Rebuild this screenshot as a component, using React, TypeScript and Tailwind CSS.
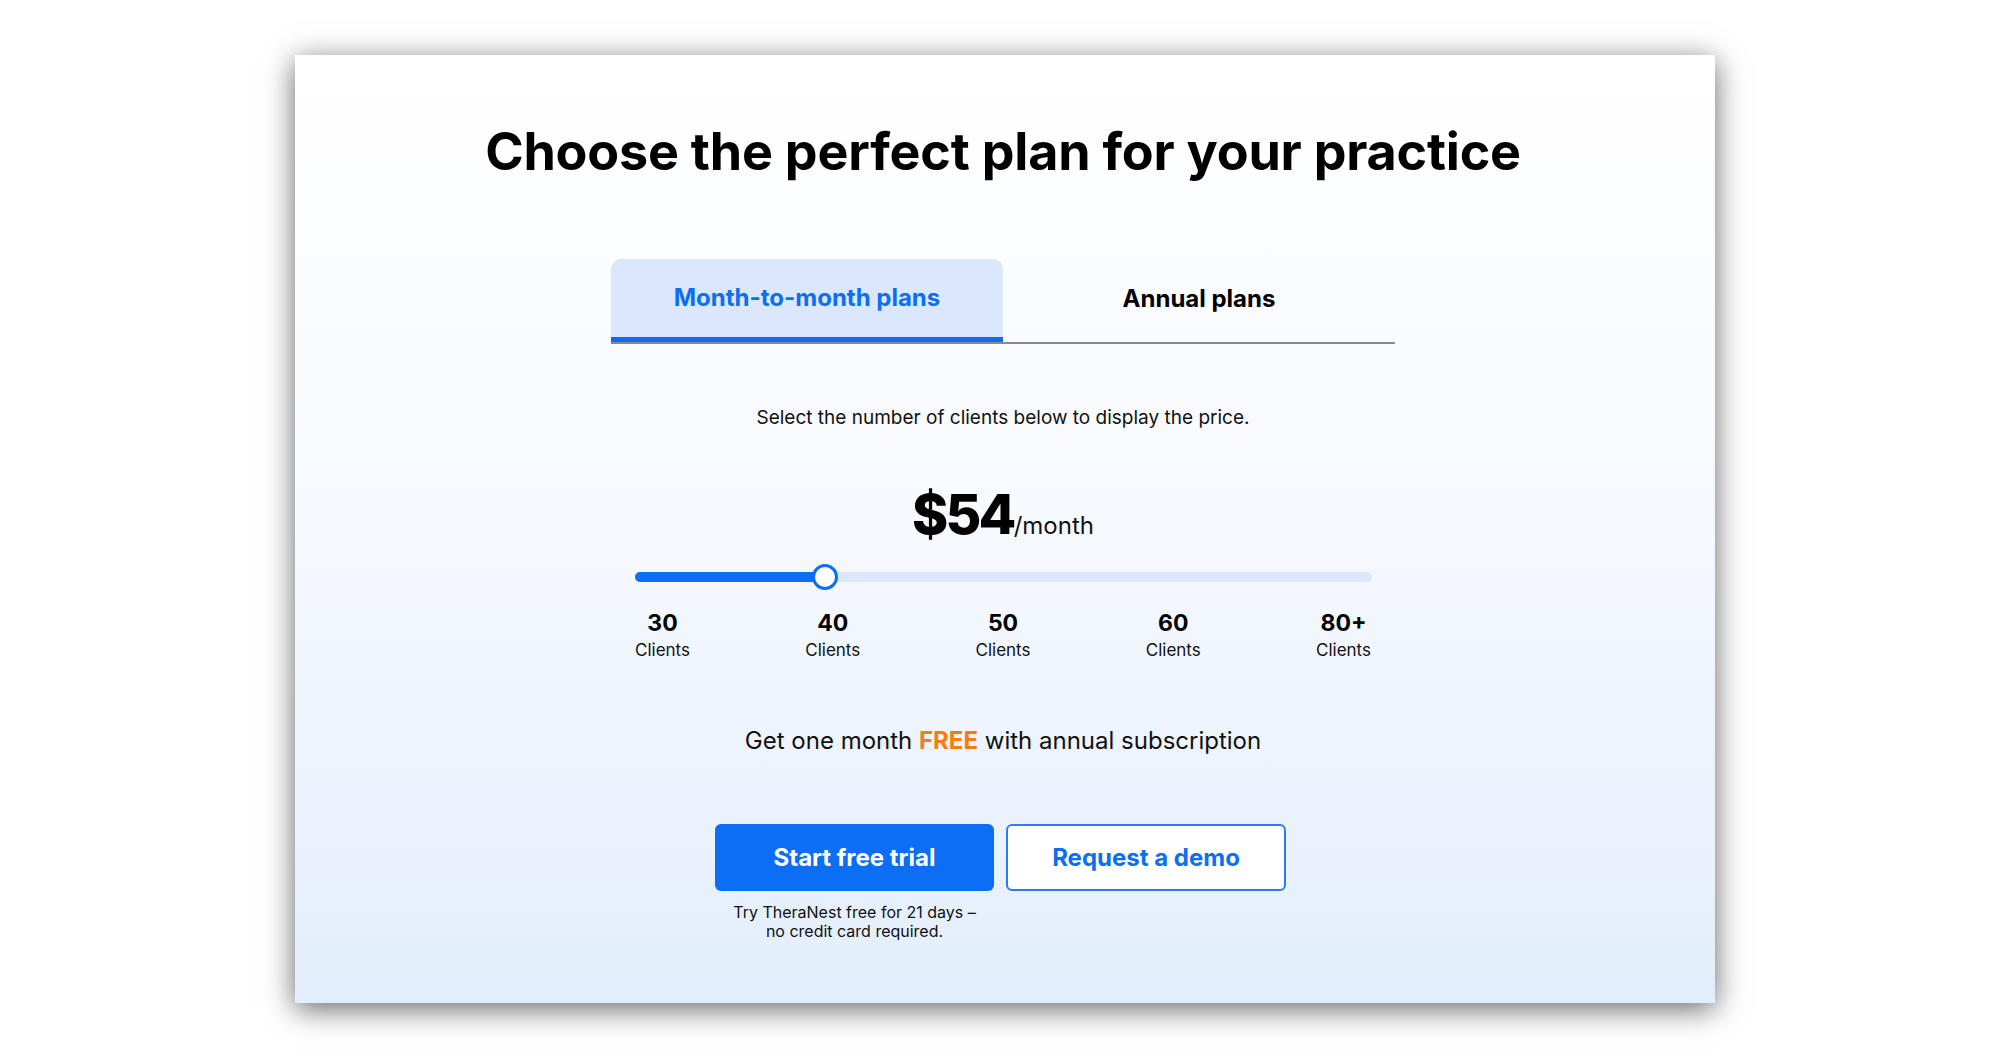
import React from 'react';

const clientSteps = ['30', '40', '50', '60', '80+'];

const App: React.FC = () => {
  return (
    <div className="w-full h-[1059px] bg-white pt-[55px] pl-[295px]" style={{ fontFamily: 'Inter, "Open Sans", sans-serif' }}>
      <div className="w-[1420px] h-[948px] pr-[4px] flex flex-col items-center bg-gradient-to-b from-white via-[#f6f9fe] to-[#e3eefc] shadow-[0_6px_28px_rgba(0,0,0,0.6)]">
        <h1 className="mt-[67px] text-[52px] leading-[60px] font-bold text-black tracking-[-0.2px]">
          Choose the perfect plan for your practice
        </h1>

        {/* plan type tabs */}
        <div className="mt-[77px] flex w-[784px] border-b-2 border-[#8a8a8a]">
          <div className="flex-1 h-[83px] -mb-[2px] flex items-center justify-center rounded-t-[10px] bg-[#dbe7fd] border-b-[5px] border-[#0b6ef5]">
            <span className="text-[24px] font-bold text-[#0b6ef5]">Month-to-month plans</span>
          </div>
          <div className="flex-1 h-[83px] pb-[4px] flex items-center justify-center">
            <span className="text-[24px] font-bold text-black">Annual plans</span>
          </div>
        </div>

        <p className="mt-[62px] text-[19px] leading-[24px] text-[#111]">
          Select the number of clients below to display the price.
        </p>

        <div className="mt-[43px] h-[60px] flex items-baseline">
          <span className="text-[55px] font-extrabold tracking-[-2.8px] text-black">$54</span>
          <span className="text-[24px] text-[#111]">/month</span>
        </div>

        {/* client slider */}
        <div className="mt-[31px] w-[737px] h-[26px] relative flex items-center">
          <div className="w-full h-[10px] rounded-full bg-[#dbe7fb]">
            <div className="w-[190px] h-full rounded-full bg-[#0b6ef5]" />
          </div>
          <div className="absolute left-[177px] top-0 w-[26px] h-[26px] rounded-full bg-white border-[3px] border-[#0b6ef5]" />
        </div>

        <div className="mt-[18px] w-[737px] flex justify-between">
          {clientSteps.map((n) => (
            <div key={n} className="w-[56px] flex flex-col items-center">
              <span className="text-[23px] leading-[30px] font-bold text-black">{n}</span>
              <span className="text-[17px] leading-[24px] text-[#111]">Clients</span>
            </div>
          ))}
        </div>

        <p className="mt-[63px] text-[24px] leading-[32px] text-[#111]">
          Get one month <span className="font-bold text-[#f97d0b]">FREE</span> with annual subscription
        </p>

        <div className="mt-[67px] mr-[5px] flex gap-[12px] items-start">
          <div className="flex flex-col items-center">
            <button className="w-[279px] h-[67px] rounded-[6px] bg-[#0b6ef5] text-white text-[24px] font-bold">
              Start free trial
            </button>
            <p className="mt-[12px] text-[16px] leading-[19px] text-[#111] text-center">
              Try TheraNest free for 21 days –<br />no credit card required.
            </p>
          </div>
          <button className="w-[280px] h-[67px] rounded-[6px] bg-white border-2 border-[#2b7af6] text-[#0b6ef5] text-[24px] font-bold">
            Request a demo
          </button>
        </div>
      </div>
    </div>
  );
};

export default App;
